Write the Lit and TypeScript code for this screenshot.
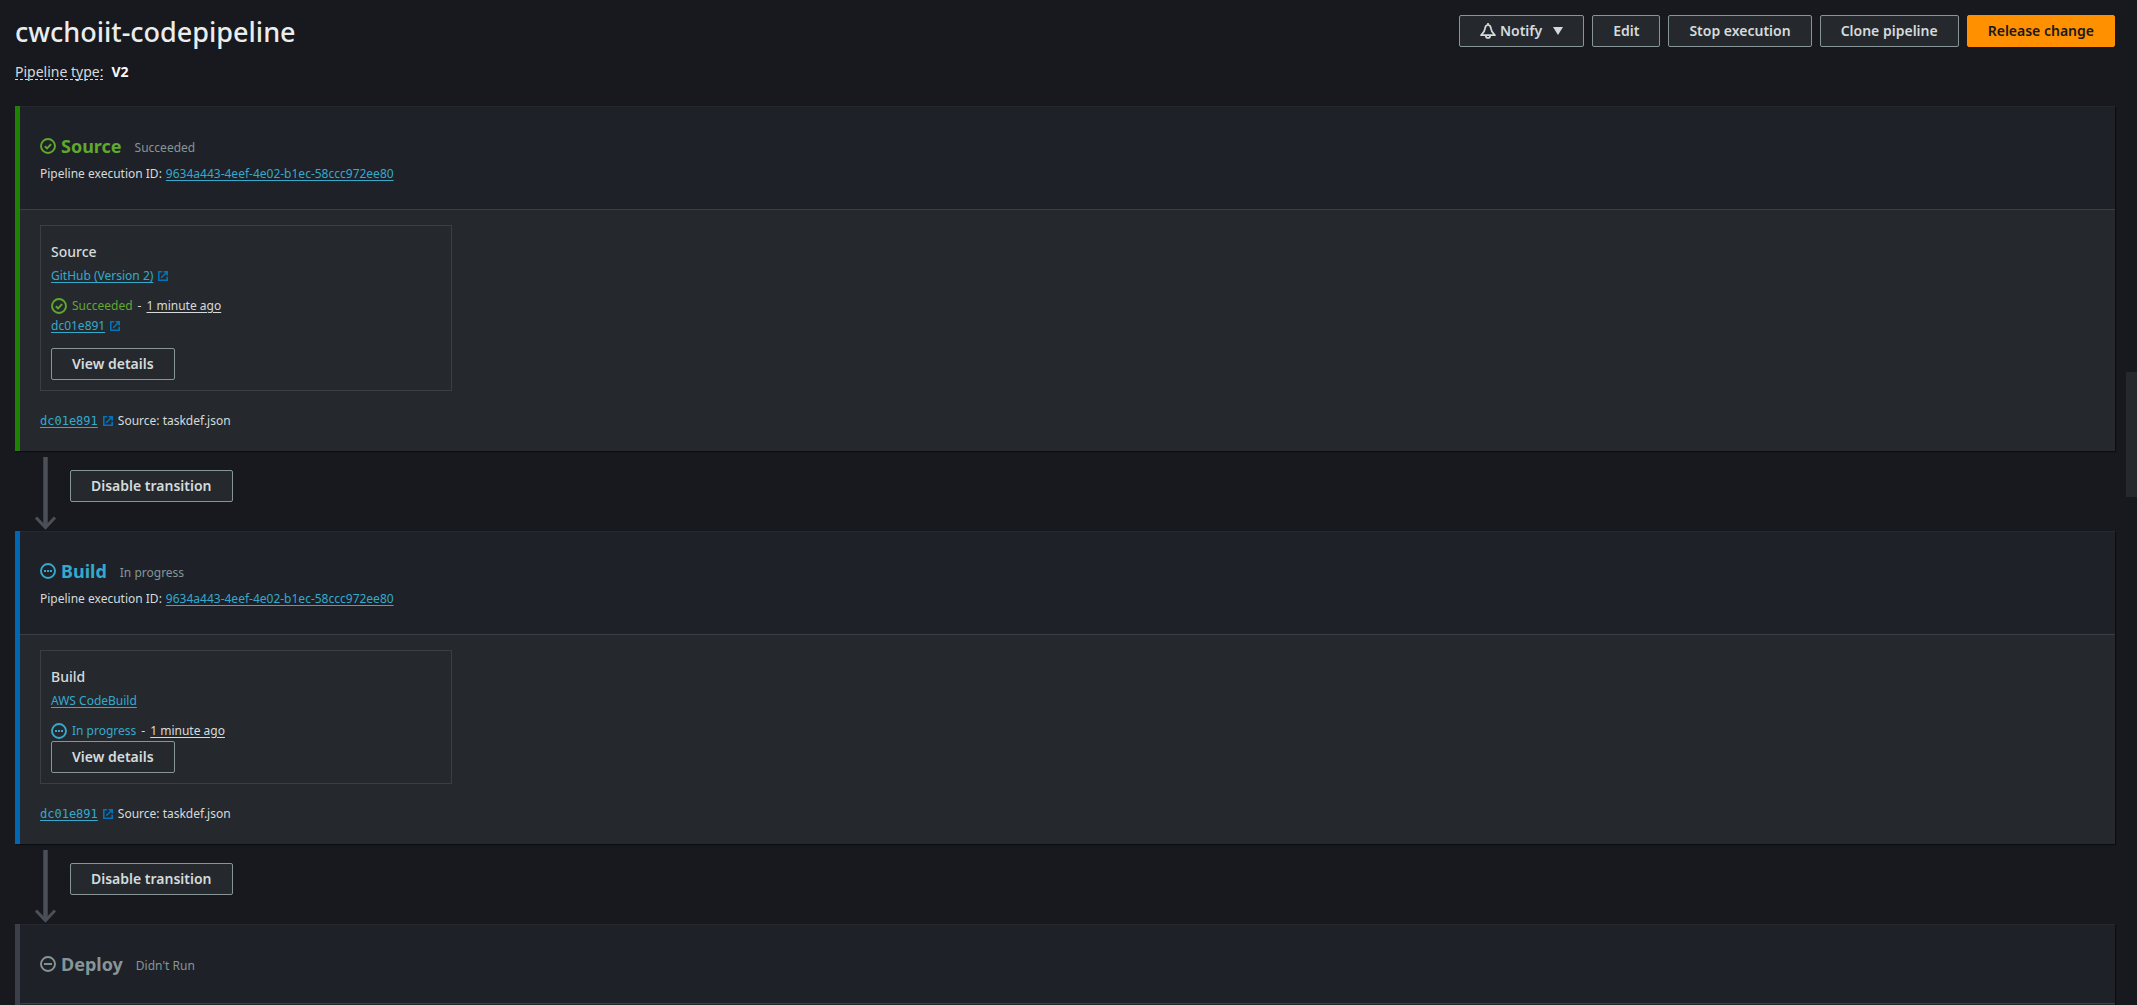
import { LitElement, html, svg, css, nothing } from "lit";
import { customElement, property } from "lit/decorators.js";

type Status = "succeeded" | "progress" | "idle";

interface Action {
  name: string;
  provider: string;
  external: boolean;
  revision?: string;
}

interface Stage {
  name: string;
  status: Status;
  executionId?: string;
  action?: Action;
}

const EXECUTION_ID = "9634a443-4eef-4e02-b1ec-58ccc972ee80";
const REVISION = "dc01e891";

const LABELS: Record<Status, string> = {
  succeeded: "Succeeded",
  progress: "In progress",
  idle: "Didn't Run",
};

const STAGES: Stage[] = [
  {
    name: "Source",
    status: "succeeded",
    executionId: EXECUTION_ID,
    action: { name: "Source", provider: "GitHub (Version 2)", external: true, revision: REVISION },
  },
  {
    name: "Build",
    status: "progress",
    executionId: EXECUTION_ID,
    action: { name: "Build", provider: "AWS CodeBuild", external: false },
  },
  { name: "Deploy", status: "idle" },
];

const glyphs: Record<Status, unknown> = {
  succeeded: svg`<path d="M4.800 8.200l2.300 2.200 4-4.300" />`,
  progress: svg`<path d="M4 8h2M7 8h2M10 8h2" />`,
  idle: svg`<path d="M4 8h8" />`,
};

const statusIcon = (status: Status) => html`
  <svg class="status-icon" viewBox="0 0 16 16" aria-hidden="true">
    <circle cx="8" cy="8" r="7" />
    ${glyphs[status]}
  </svg>
`;

const externalIcon = html`
  <svg class="external-icon" viewBox="0 0 10 10" aria-hidden="true">
    <path d="M4.200 .8H.8v8.400h8.400V5.800M5.600 .8h3.600v3.600M9 1L3.200 6.800" />
  </svg>
`;

const shared = css`
  :host {
    display: block;
  }
  a {
    color: #35a9cc;
    text-underline-offset: 2px;
  }
  button {
    box-sizing: border-box;
    height: 32px;
    padding: 0 20px;
    border: 1px solid #879596;
    border-radius: 2px;
    background: #25292e;
    color: #d5dbdb;
    font: 600 14px/22px "Noto Sans", sans-serif;
    white-space: nowrap;
    cursor: pointer;
  }
`;

@customElement("pipeline-stage")
export class PipelineStage extends LitElement {
  @property({ attribute: false }) stage!: Stage;

  static styles = [
    shared,
    css`
      .stage {
        border-left: 5px solid #3c3f49;
        box-shadow: 1px 1px 1px #0c0d10;
      }
      .stage.succeeded {
        border-left-color: #1d8102;
      }
      .stage.progress {
        border-left-color: #0067b5;
      }
      header {
        padding: 28px 20px;
        border-top: 1px solid #25292d;
        border-bottom: 1px solid #3a3e45;
        background: #1e2128;
      }
      .heading {
        display: flex;
        align-items: center;
        gap: 5px;
      }
      h2 {
        margin: 0 8px 0 0;
        font: bold 18px/22px "Noto Sans", sans-serif;
      }
      .label {
        padding-top: 4px;
        font-size: 12px;
        line-height: 18px;
        color: #879596;
      }
      .succeeded .tone {
        color: #60a82e;
      }
      .progress .tone {
        color: #35a9cc;
      }
      .idle .tone {
        color: #879596;
      }
      .status-icon {
        flex: none;
        width: 16px;
        height: 16px;
        fill: none;
        stroke: currentColor;
        stroke-width: 1.9;
      }
      .external-icon {
        flex: none;
        width: 10px;
        height: 10px;
        fill: none;
        stroke: #0073bb;
        stroke-width: 1.6;
      }
      .execution {
        display: flex;
        gap: 4px;
        margin: 10px 0 0;
        font-size: 12px;
        line-height: 14px;
      }
      .body {
        padding: 15px 20px 20px;
        background: #25292e;
      }
      .card {
        box-sizing: border-box;
        width: 412px;
        padding: 15px 10px 10px;
        border: 1px solid #3a3e45;
      }
      h3 {
        margin: 0 0 4px;
        font: 500 14px/22px "Noto Sans", sans-serif;
      }
      .row {
        display: flex;
        align-items: center;
        gap: 5px;
        font-size: 12px;
        line-height: 20px;
      }
      .provider {
        margin-bottom: 11px;
        line-height: 18px;
      }
      .time {
        text-decoration: underline;
        text-underline-offset: 2px;
      }
      .revision {
        margin-bottom: 12px;
      }
      .artifact {
        margin-top: 20px;
      }
      .artifact a {
        font-family: "DejaVu Sans Mono", monospace;
      }
      .bare {
        padding: 0 0 1px;
      }
    `,
  ];

  private card(action: Action, status: Status) {
    return html`
      <div class="card">
        <h3>${action.name}</h3>
        <div class="row provider">
          <a href="#provider">${action.provider}</a>${action.external ? externalIcon : nothing}
        </div>
        <div class="row">
          <span class="row tone">${statusIcon(status)}${LABELS[status]}</span>
          <span>-</span>
          <span class="time">1 minute ago</span>
        </div>
        ${action.revision
          ? html`<div class="row revision"><a href="#revision">${action.revision}</a>${externalIcon}</div>`
          : nothing}
        <button type="button">View details</button>
      </div>
      <div class="row artifact">
        <a href="#revision">${REVISION}</a>${externalIcon}
        <span>Source: taskdef.json</span>
      </div>
    `;
  }

  render() {
    const { name, status, executionId, action } = this.stage;
    return html`
      <section class="stage ${status}">
        <header>
          <div class="heading">
            <span class="row tone">${statusIcon(status)}</span>
            <h2 class="tone">${name}</h2>
            <span class="label">${LABELS[status]}</span>
          </div>
          ${executionId
            ? html`<p class="execution">
                <span>Pipeline execution ID:</span><a href="#execution">${executionId}</a>
              </p>`
            : nothing}
        </header>
        ${action
          ? html`<div class="body">${this.card(action, status)}</div>`
          : html`<div class="body bare"></div>`}
      </section>
    `;
  }
}

@customElement("app-root")
export class AppRoot extends LitElement {
  static styles = [
    shared,
    css`
      :host {
        position: relative;
        box-sizing: border-box;
        height: 100vh;
        overflow: hidden;
        padding: 14px 22px 0 15px;
        background: #17191e;
        color: #d5dbdb;
        font: 14px/22px "Noto Sans", sans-serif;
      }
      .top {
        display: flex;
        justify-content: space-between;
        align-items: flex-start;
        margin-bottom: 23px;
      }
      h1 {
        margin: 0 0 11px;
        color: #eaeded;
        font: 500 27px/36px "Noto Sans", sans-serif;
      }
      .type {
        display: flex;
        gap: 8px;
      }
      .term {
        height: 18px;
        border-bottom: 1px dashed #d5dbdb;
      }
      .type strong {
        color: #fafafa;
      }
      .actions {
        display: flex;
        gap: 8px;
        padding-top: 1px;
      }
      .notify {
        display: flex;
        align-items: center;
        gap: 4px;
      }
      .bell {
        width: 16px;
        height: 16px;
        fill: none;
        stroke: currentColor;
        stroke-width: 1.7;
        stroke-linejoin: round;
      }
      .caret {
        width: 10px;
        height: 8px;
        margin-left: 7px;
        fill: currentColor;
      }
      .primary {
        border-color: #ff9000;
        background: #ff9000;
        color: #16191f;
      }
      .transition {
        display: flex;
        align-items: center;
        gap: 13px;
        height: 80px;
        padding-left: 20px;
      }
      .transition button {
        margin-bottom: 10px;
      }
      .arrow {
        width: 22px;
        height: 74px;
        margin-top: 4px;
        fill: none;
        stroke: #4a4f58;
      }
      .handle {
        position: absolute;
        top: 372px;
        right: 0;
        width: 11px;
        height: 125px;
        background: #25292e;
      }
    `,
  ];

  private transition() {
    return html`
      <div class="transition">
        <svg class="arrow" viewBox="0 0 22 74" aria-hidden="true">
          <path d="M10.500 1v69" stroke-width="4.500" />
          <path d="M1 61.500L10.500 71.500L20 61.500" stroke-width="3" />
        </svg>
        <button type="button">Disable transition</button>
      </div>
    `;
  }

  render() {
    return html`
      <div class="top">
        <div>
          <h1>cwchoiit-codepipeline</h1>
          <div class="type"><span class="term">Pipeline type:</span><strong>V2</strong></div>
        </div>
        <div class="actions">
          <button class="notify" type="button">
            <svg class="bell" viewBox="0 0 16 16" aria-hidden="true">
              <path d="M8 2C6 2 5.200 3.600 5 5.600C4.800 8.600 3.200 10 1 12.200H15C12.800 10 11.200 8.600 11 5.600C10.800 3.600 10 2 8 2ZM8 0v2M5.800 12.400C5.800 15.800 10.200 15.800 10.200 12.400" />
            </svg>
            Notify
            <svg class="caret" viewBox="0 0 10 8" aria-hidden="true"><path d="M0 0h10L5 8z" /></svg>
          </button>
          <button type="button">Edit</button>
          <button type="button">Stop execution</button>
          <button type="button">Clone pipeline</button>
          <button class="primary" type="button">Release change</button>
        </div>
      </div>
      <main>
        ${STAGES.map(
          (stage, i) => html`
            ${i ? this.transition() : nothing}
            <pipeline-stage .stage=${stage}></pipeline-stage>
          `,
        )}
      </main>
      <div class="handle"></div>
    `;
  }
}
